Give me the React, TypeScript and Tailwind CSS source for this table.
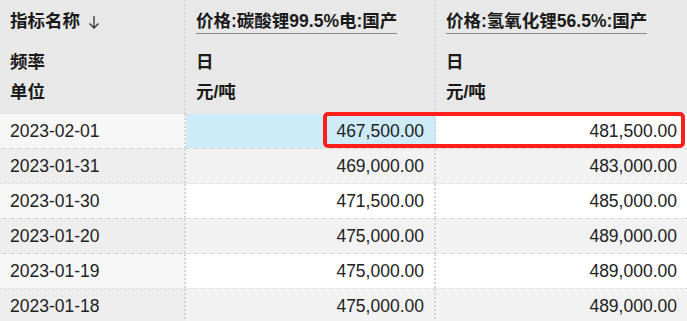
import React from "react";

const rows = [
  { date: "2023-02-01", a: "467,500.00", b: "481,500.00" },
  { date: "2023-01-31", a: "469,000.00", b: "483,000.00" },
  { date: "2023-01-30", a: "471,500.00", b: "485,000.00" },
  { date: "2023-01-20", a: "475,000.00", b: "489,000.00" },
  { date: "2023-01-19", a: "475,000.00", b: "489,000.00" },
  { date: "2023-01-18", a: "475,000.00", b: "489,000.00" },
];

const font = { fontFamily: '"Liberation Sans", "Noto Sans CJK SC", sans-serif' };

function HeaderCol({ title, freq, unit, arrow }: { title: string; freq: string; unit: string; arrow?: boolean }) {
  return (
    <div className="flex flex-col pt-2 pb-[6px] font-bold text-[#1a1a1a]">
      <div className="h-[25px]">
        {arrow ? (
          <span className="inline-flex items-center leading-[24px]">
            {title}
            <svg width="14" height="16" viewBox="0 0 14 16" className="ml-[7px] mt-[2px]">
              <path d="M7 2v12M2.5 9.5L7 14l4.5-4.5" stroke="#333" strokeWidth="1.3" fill="none" />
            </svg>
          </span>
        ) : (
          <span className="inline-block leading-[24px] border-b border-[#8a8a8a]">{title}</span>
        )}
      </div>
      <div className="mt-[14px] leading-[30px]">{freq}</div>
      <div className="leading-[30px]">{unit}</div>
    </div>
  );
}

export default function App() {
  return (
    <div className="relative w-[687px] h-[321px] overflow-hidden bg-white text-[17.5px] text-[#222]" style={font}>
      {/* header */}
      <div className="grid grid-cols-[186px_250px_1fr] h-[114px] bg-[#e8e8e8]">
        <div className="pl-[10px] border-r-2 border-dotted border-[#d6d6d6]">
          <HeaderCol title="指标名称" freq="频率" unit="单位" arrow />
        </div>
        <div className="pl-[10px] border-r-2 border-dotted border-[#d6d6d6]">
          <HeaderCol title="价格:碳酸锂99.5%电:国产" freq="日" unit="元/吨" />
        </div>
        <div className="pl-[10px]">
          <HeaderCol title="价格:氢氧化锂56.5%:国产" freq="日" unit="元/吨" />
        </div>
      </div>

      {/* body */}
      {rows.map((r, i) => {
        const odd = i % 2 === 1;
        const first = i === 0;
        return (
          <div key={r.date} className="grid grid-cols-[186px_250px_1fr] h-[35px] border-b border-dotted border-[#d0d0d0]">
            <div
              className={`flex items-center pl-[10px] border-r-2 border-dotted border-[#d6d6d6] ${
                odd ? "bg-[#eeeeee]" : "bg-[#f7f7f7]"
              }`}
            >
              {r.date}
            </div>
            <div
              className={`flex items-center justify-end pr-[10px] border-r-2 border-dotted border-[#d6d6d6] ${
                first ? "bg-[#cdebf8]" : odd ? "bg-[#f2f2f2]" : "bg-white"
              }`}
            >
              {r.a}
            </div>
            <div className={`flex items-center justify-end pr-[10px] ${odd ? "bg-[#f2f2f2]" : "bg-white"}`}>{r.b}</div>
          </div>
        );
      })}

      {/* annotation box */}
      <div className="absolute left-[323px] top-[112px] w-[362px] h-[36px] border-4 border-[#ff1f1a] rounded-[5px] pointer-events-none" />
    </div>
  );
}
